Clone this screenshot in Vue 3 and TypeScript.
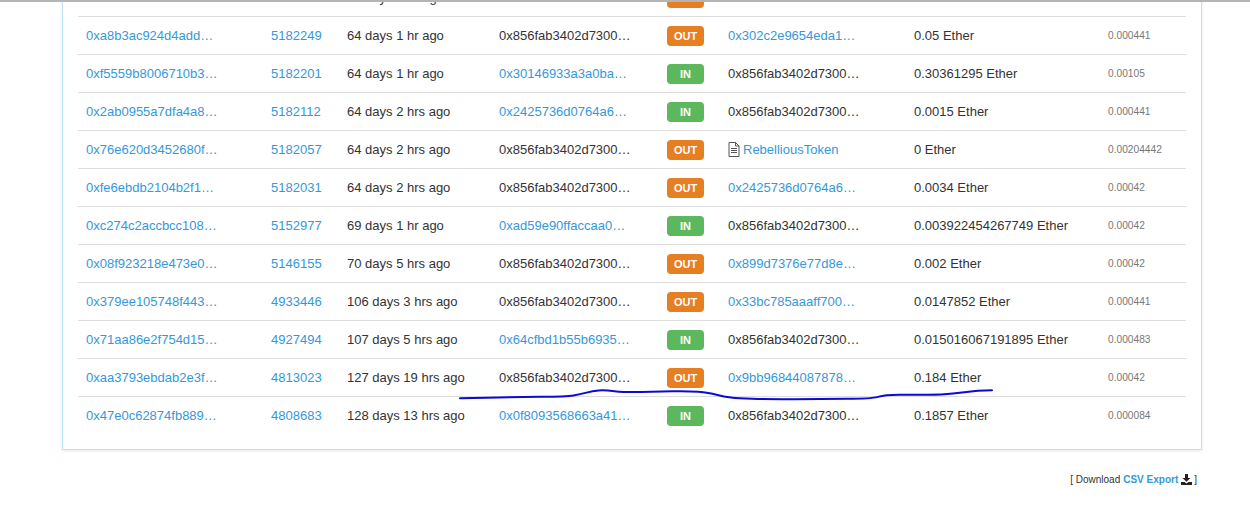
<script setup lang="ts">
interface Party { text: string; link: boolean; contract?: boolean }
interface Row {
  hash: string
  block: string
  age: string
  from: Party
  dir: 'IN' | 'OUT'
  to: Party
  value: string
  fee: string
}

const me: Party = { text: '0x856fab3402d7300b6f5ba1c4b1bd6d4e7f8e4a21', link: false }
const addr = (text: string): Party => ({ text, link: true })

const rows: Row[] = [
  { hash: '0x9c4012e0c822b0a2cd7e11', block: '5182270', age: '64 days 1 hr ago', from: me, dir: 'OUT', to: addr('0x7bc0ab28e5c4a3e9f10c2d'), value: '0.24 Ether', fee: '0.000441' },
  { hash: '0xa8b3ac924d4add7e11c0f9', block: '5182249', age: '64 days 1 hr ago', from: me, dir: 'OUT', to: addr('0x302c2e9654eda1b7c3e8f0'), value: '0.05 Ether', fee: '0.000441' },
  { hash: '0xf5559b8006710b3e2a91d7', block: '5182201', age: '64 days 1 hr ago', from: addr('0x30146933a3a0ba7c9e12d4'), dir: 'IN', to: me, value: '0.30361295 Ether', fee: '0.00105' },
  { hash: '0x2ab0955a7dfa4a8c31e6b0', block: '5182112', age: '64 days 2 hrs ago', from: addr('0x2425736d0764a6e1f0b9c3'), dir: 'IN', to: me, value: '0.0015 Ether', fee: '0.000441' },
  { hash: '0x76e620d3452680f9b1c7a2', block: '5182057', age: '64 days 2 hrs ago', from: me, dir: 'OUT', to: { text: 'RebelliousToken', link: true, contract: true }, value: '0 Ether', fee: '0.00204442' },
  { hash: '0xfe6ebdb2104b2f1d08c9e3', block: '5182031', age: '64 days 2 hrs ago', from: me, dir: 'OUT', to: addr('0x2425736d0764a6e1f0b9c3'), value: '0.0034 Ether', fee: '0.00042' },
  { hash: '0xc274c2accbcc108e7a13f5', block: '5152977', age: '69 days 1 hr ago', from: addr('0xad59e90ffaccaa0c2b7d18'), dir: 'IN', to: me, value: '0.003922454267749 Ether', fee: '0.00042' },
  { hash: '0x08f923218e473e0b5d92c1', block: '5146155', age: '70 days 5 hrs ago', from: me, dir: 'OUT', to: addr('0x899d7376e77d8e3fa01b6c'), value: '0.002 Ether', fee: '0.00042' },
  { hash: '0x379ee105748f443a6c20d8', block: '4933446', age: '106 days 3 hrs ago', from: me, dir: 'OUT', to: addr('0x33bc785aaaff700d1e94b2'), value: '0.0147852 Ether', fee: '0.000441' },
  { hash: '0x71aa86e2f754d15c9b03e7', block: '4927494', age: '107 days 5 hrs ago', from: addr('0x64cfbd1b55b6935e8a07c4'), dir: 'IN', to: me, value: '0.015016067191895 Ether', fee: '0.000483' },
  { hash: '0xaa3793ebdab2e3f16d084c', block: '4813023', age: '127 days 19 hrs ago', from: me, dir: 'OUT', to: addr('0x9bb96844087878a2c5e1d0'), value: '0.184 Ether', fee: '0.00042' },
  { hash: '0x47e0c62874fb889d2a7f13', block: '4808683', age: '128 days 13 hrs ago', from: addr('0x0f8093568663a41c7be902'), dir: 'IN', to: me, value: '0.1857 Ether', fee: '0.000084' }
]

const ink: [number, number][] = [
  [460, 398.3], [513, 397], [567, 396.7], [580, 394.3], [593, 391], [604, 390],
  [625, 392.3], [658, 391.7], [687, 391], [709, 392.7], [724, 396.7], [738, 398.3],
  [767, 399.3], [822, 399], [871, 398.7], [885, 395], [913, 394.7], [942, 394.7],
  [964, 392.3], [978, 390.7], [992, 390.3]
]
// Smooth the pen stroke: each sampled point is a control point, midpoints are the joints.
const inkPath = ink.reduce((d, p, i) => {
  if (i === 0) return `M${p[0]} ${p[1]}`
  const prev = ink[i - 1]
  return `${d} Q${prev[0]} ${prev[1]} ${(prev[0] + p[0]) / 2} ${(prev[1] + p[1]) / 2}`
}, '') + ` L992 390.3`
</script>

<template>
  <div class="page">
    <div class="topline"></div>
    <section class="card">
      <table class="txs">
        <colgroup>
          <col class="c-hash" /><col class="c-block" /><col class="c-age" /><col class="c-from" />
          <col class="c-dir" /><col class="c-to" /><col class="c-value" /><col class="c-fee" />
        </colgroup>
        <tbody>
          <tr v-for="r in rows" :key="r.hash">
            <td><a class="cut">{{ r.hash }}</a></td>
            <td><a>{{ r.block }}</a></td>
            <td>{{ r.age }}</td>
            <td><span class="cut" :class="{ link: r.from.link }">{{ r.from.text }}</span></td>
            <td><span class="badge" :class="r.dir === 'IN' ? 'in' : 'out'">{{ r.dir }}</span></td>
            <td>
              <span v-if="r.to.contract" class="contract">
                <svg class="doc" width="12" height="15" viewBox="0 0 12 15" aria-hidden="true">
                  <path d="M1 .5h6.500L11 4v10.500H1z" fill="none" stroke="#555" />
                  <path d="M7.500.5V4H11M3 6.500h6M3 8.500h6M3 10.500h6" fill="none" stroke="#555" />
                </svg>
                <a>{{ r.to.text }}</a>
              </span>
              <span v-else class="cut" :class="{ link: r.to.link }">{{ r.to.text }}</span>
            </td>
            <td>{{ r.value }}</td>
            <td class="fee">{{ r.fee }}</td>
          </tr>
        </tbody>
      </table>
    </section>
    <footer class="export">
      [ Download <a>CSV Export</a>
      <svg width="11" height="11" viewBox="0 0 11 11" aria-hidden="true">
        <path d="M4 0h3v4h2.500L5.500 7.800 1.500 4H4z" fill="#222" />
        <path d="M0 8h3.500l2 1.500 2-1.500H11v3H0z" fill="#222" />
      </svg>
      ]
    </footer>
    <svg class="ink" width="1250" height="510" viewBox="0 0 1250 510" aria-hidden="true">
      <path :d="inkPath" fill="none" stroke="#0a0ad8" stroke-width="2" stroke-linejoin="round" stroke-linecap="round" />
    </svg>
  </div>
</template>

<style>
html, body { margin: 0; background: #fff; }
</style>

<style scoped>
.page {
  position: relative;
  width: 1250px;
  height: 510px;
  overflow: hidden;
  font-family: "Liberation Sans", Arial, sans-serif;
  font-size: 13px;
  color: #333;
}
.topline {
  position: absolute;
  inset: 0 0 auto 0;
  height: 2px;
  background: #b5b5b5;
  z-index: 2;
}
.card {
  box-sizing: border-box;
  width: 1140px;
  margin: -21px 0 0 62px;
  padding: 0 15px 15px;
  background: #fff;
  border: 1px solid #bde5f0;
  border-top: 0;
  box-shadow: 0 1px 3px rgba(0, 0, 0, 0.1);
}
.txs {
  width: 1108px;
  table-layout: fixed;
  border-collapse: collapse;
}
.c-hash { width: 185px; }
.c-block { width: 76px; }
.c-age { width: 152px; }
.c-from { width: 168px; }
.c-dir { width: 61px; }
.c-to { width: 186px; }
.c-value { width: 194px; }
.c-fee { width: 86px; }
td {
  height: 37px;
  padding: 0 8px;
  border-bottom: 1px solid #ddd;
  white-space: nowrap;
  vertical-align: middle;
}
tr:last-child td { border-bottom: 0; }
a, .link { color: #3498db; }
.cut {
  display: block;
  max-width: 132px;
  overflow: hidden;
  text-overflow: ellipsis;
}
.badge {
  display: block;
  width: 37px;
  height: 20px;
  line-height: 20px;
  border-radius: 4px;
  text-align: center;
  font-size: 11px;
  font-weight: 700;
  color: #fff;
}
.out { background: #e67e22; }
.in { background: #5cb85c; }
.contract { display: flex; align-items: center; gap: 3px; }
.doc { flex: none; }
.fee { font-size: 10.200px; color: #777; }
.export {
  display: flex;
  justify-content: flex-end;
  align-items: center;
  gap: 2px;
  width: 1197px;
  margin-top: 24px;
  font-size: 10px;
}
.export a { font-weight: 700; margin: 0 1px; }
.ink { position: absolute; inset: 0; pointer-events: none; }
</style>
